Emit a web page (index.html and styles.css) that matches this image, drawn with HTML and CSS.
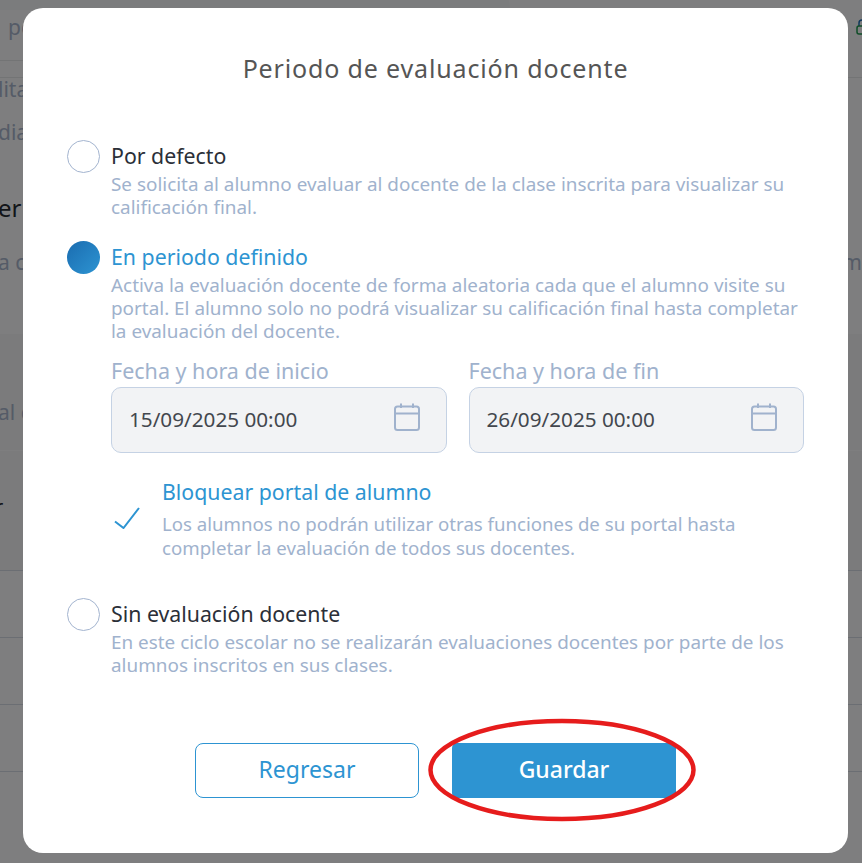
FILE: index.html
```html
<!DOCTYPE html>
<html lang="es">
<head>
    <meta charset="UTF-8">
    <meta name="viewport" content="width=device-width, initial-scale=1.0">
    <title>Periodo de evaluación docente</title>
    <link rel="stylesheet" href="styles.css">
</head>
<body>
    <!-- page behind the dialog, mostly hidden -->
    <div class="page">
        <div class="tab"></div>
        <div class="page-row row-top">
            <span class="page-text">po</span>
            <svg class="lock" width="12" height="18" viewBox="0 0 12 18" fill="none">
                <path d="M3 9V6a3 3 0 0 1 6 0" stroke="#1f6fb5" stroke-width="1.5"/>
                <rect x="1" y="9" width="9" height="8" rx="2" stroke="#1e9a50" stroke-width="1.5"/>
            </svg>
        </div>
        <div class="page-row row-lita"><span class="page-text shift">lita</span></div>
        <div class="page-row row-dia"><span class="page-text shift">dia</span></div>
        <div class="page-row row-er"><span class="page-heading shift">er</span></div>
        <div class="page-row row-ca">
            <span class="page-text shift">a c</span>
            <span class="page-text end">m</span>
        </div>
        <div class="page-band band-one"><span class="page-text shift">al c</span></div>
        <div class="page-band band-two"><span class="page-heading shift small">r</span></div>
        <div class="page-line"></div>
        <div class="page-line"></div>
        <div class="page-line"></div>
    </div>
    <div class="overlay"></div>

    <div class="modal">
        <h1>Periodo de evaluación docente</h1>

        <div class="option">
            <span class="radio"></span>
            <div class="option-text">
                <div class="option-title">Por defecto</div>
                <p class="option-desc">Se solicita al alumno evaluar al docente de la clase inscrita para visualizar su calificación final.</p>
            </div>
        </div>

        <div class="option option-active">
            <span class="radio radio-on"></span>
            <div class="option-text">
                <div class="option-title">En periodo definido</div>
                <p class="option-desc">Activa la evaluación docente de forma aleatoria cada que el alumno visite su portal. El alumno solo no podrá visualizar su calificación final hasta completar la evaluación del docente.</p>
                <div class="dates">
                    <div class="date-field">
                        <label>Fecha y hora de inicio</label>
                        <div class="date-input">
                            <span>15/09/2025 00:00</span>
                            <svg width="28" height="28" viewBox="0 0 28 28" fill="none" stroke="#a0b2cd" stroke-width="2">
                                <rect x="2" y="3.5" width="24" height="23.500" rx="2.500"/>
                                <path d="M2 10.500H26M8 0.500V5M20 0.500V5"/>
                            </svg>
                        </div>
                    </div>
                    <div class="date-field">
                        <label>Fecha y hora de fin</label>
                        <div class="date-input">
                            <span>26/09/2025 00:00</span>
                            <svg width="28" height="28" viewBox="0 0 28 28" fill="none" stroke="#a0b2cd" stroke-width="2">
                                <rect x="2" y="3.5" width="24" height="23.500" rx="2.500"/>
                                <path d="M2 10.500H26M8 0.500V5M20 0.500V5"/>
                            </svg>
                        </div>
                    </div>
                </div>
                <div class="block">
                    <svg class="check" width="26" height="22" viewBox="0 0 26 22" fill="none" stroke="#2d94d2" stroke-width="2">
                        <path d="M1 14.500L9.500 21L25 1"/>
                    </svg>
                    <div>
                        <div class="block-title">Bloquear portal de alumno</div>
                        <p class="block-desc">Los alumnos no podrán utilizar otras funciones de su portal hasta completar la evaluación de todos sus docentes.</p>
                    </div>
                </div>
            </div>
        </div>

        <div class="option">
            <span class="radio"></span>
            <div class="option-text">
                <div class="option-title">Sin evaluación docente</div>
                <p class="option-desc">En este ciclo escolar no se realizarán evaluaciones docentes por parte de los alumnos inscritos en sus clases.</p>
            </div>
        </div>

        <div class="button-group">
            <button class="back-btn">Regresar</button>
            <button class="save-btn">Guardar</button>
            <svg class="mark" width="270" height="106" viewBox="0 0 270 106" fill="none">
                <ellipse cx="135" cy="53" rx="131.500" ry="49" stroke="#e61c1c" stroke-width="4.500"/>
            </svg>
        </div>
    </div>
</body>
</html>
```

FILE: styles.css
```css
* {
    margin: 0;
    padding: 0;
    box-sizing: border-box;
}

html, body {
    height: 100%;
    overflow: hidden;
}

body {
    font-family: 'Noto Sans', 'Open Sans', sans-serif;
    background: #fcfdff;
    position: relative;
}

/* page behind the dialog */
.page {
    height: 863px;
    display: flex;
    flex-direction: column;
    overflow: hidden;
    position: relative;
}

.tab {
    position: absolute;
    top: -30px;
    left: -10px;
    width: 520px;
    height: 40px;
    background: #f7f8fa;
    border-radius: 0 40px 0 0;
}

.page-row {
    display: flex;
    justify-content: space-between;
    align-items: center;
    padding: 0 8px;
}

.page-text {
    font-size: 21px;
    color: #aab7ce;
    white-space: nowrap;
}

.page-heading {
    font-size: 24px;
    color: #262b33;
    white-space: nowrap;
}

.shift {
    margin-left: -10px;
}

.end {
    margin-right: -8px;
}

.small {
    font-size: 20px;
    margin-left: -13px;
}

.row-top {
    height: 61px;
    padding-bottom: 8px;
    background: linear-gradient(#e6e8eb, #e6e8eb) left bottom / 100px 1px no-repeat;
}

.lock {
    margin-right: -14px;
    margin-top: -2px;
}

.row-lita {
    height: 56px;
    border-top: 1px solid #e6e8eb;
    margin-top: 16px;
    padding-bottom: 34px;
}

.row-dia {
    height: 26px;
    margin-top: -14px;
}

.row-er {
    height: 40px;
    margin-top: 42px;
}

.row-ca {
    height: 34px;
    margin-top: 18px;
}

.page-band {
    display: flex;
    align-items: center;
    padding: 0 8px;
}

.band-one {
    height: 116px;
    margin-top: 55px;
    background: #f6f7f9;
    padding-top: 40px;
}

.band-two {
    height: 121px;
    background: #f6f7f9;
    border-top: 1px solid #fcfdff;
    border-bottom: 1px solid #d6dce6;
    padding-bottom: 8px;
}

.page-line {
    height: 67px;
    flex: none;
    border-bottom: 1px solid #d6dce6;
}

.overlay {
    position: absolute;
    inset: 0;
    background: rgba(0, 0, 0, 0.5);
}

/* dialog */
.modal {
    position: absolute;
    top: 8px;
    left: 23px;
    width: 825px;
    height: 845px;
    background: white;
    border-radius: 20px;
    padding: 0 44px;
}

h1 {
    font-size: 25px;
    font-weight: 400;
    line-height: 34px;
    letter-spacing: 0.85px;
    color: #555;
    text-align: center;
    padding-top: 43px;
    margin-bottom: 55px;
}

.option {
    display: flex;
    gap: 11px;
    margin-bottom: 22px;
}

.option-active {
    margin-bottom: 38px;
}

.radio {
    flex: none;
    width: 33px;
    height: 33px;
    border: 1px solid #a3b4cf;
    border-radius: 50%;
    background: white;
}

.radio-on {
    border: none;
    background: linear-gradient(135deg, #1a6cb0 0%, #2d94d2 100%);
}

.option-text {
    flex: 1;
    min-width: 0;
    padding-top: 3px;
}

.option-title {
    font-size: 21.3px;
    line-height: 26px;
    color: #2b2f38;
}

.option-active .option-title {
    color: #2d94d2;
}

.option-desc {
    font-size: 18.9px;
    line-height: 23px;
    color: #a0b2cd;
    margin-top: 4px;
}

.dates {
    display: flex;
    gap: 22px;
    margin-top: 15px;
}

.date-field {
    flex: 1;
}

.date-field label {
    display: block;
    font-size: 21.5px;
    line-height: 26px;
    color: #a0b2cd;
    margin-bottom: 3px;
}

.date-input {
    height: 66px;
    display: flex;
    justify-content: space-between;
    align-items: center;
    padding: 0 25px 0 17px;
    background: #f2f3f5;
    border: 1px solid #c5d2e4;
    border-radius: 10px;
    font-size: 20.7px;
    color: #43474e;
}

.date-input span {
    margin-top: -3px;
}

.date-input svg {
    margin-top: -6px;
}

.block {
    display: flex;
    align-items: center;
    gap: 22px;
    padding-left: 3px;
    margin-top: 26px;
}

.check {
    flex: none;
    margin-top: -3px;
}

.block-title {
    font-size: 21.3px;
    line-height: 26px;
    color: #2d94d2;
}

.block-desc {
    font-size: 18.65px;
    line-height: 24px;
    color: #a0b2cd;
    margin-top: 7px;
    max-width: 600px;
}

.button-group {
    position: absolute;
    top: 735px;
    left: 0;
    width: 100%;
    display: flex;
    justify-content: center;
    gap: 33px;
}

button {
    width: 224px;
    height: 55px;
    padding-bottom: 4px;
    border-radius: 8px;
    font-family: inherit;
    font-size: 23px;
    cursor: pointer;
}

.back-btn {
    background: white;
    color: #2d94d2;
    border: 1px solid #2d94d2;
}

.save-btn {
    background: #2d94d2;
    color: white;
    border: none;
    border-radius: 5px;
    font-weight: 500;
}

.mark {
    position: absolute;
    top: -26px;
    left: 404px;
}
```
